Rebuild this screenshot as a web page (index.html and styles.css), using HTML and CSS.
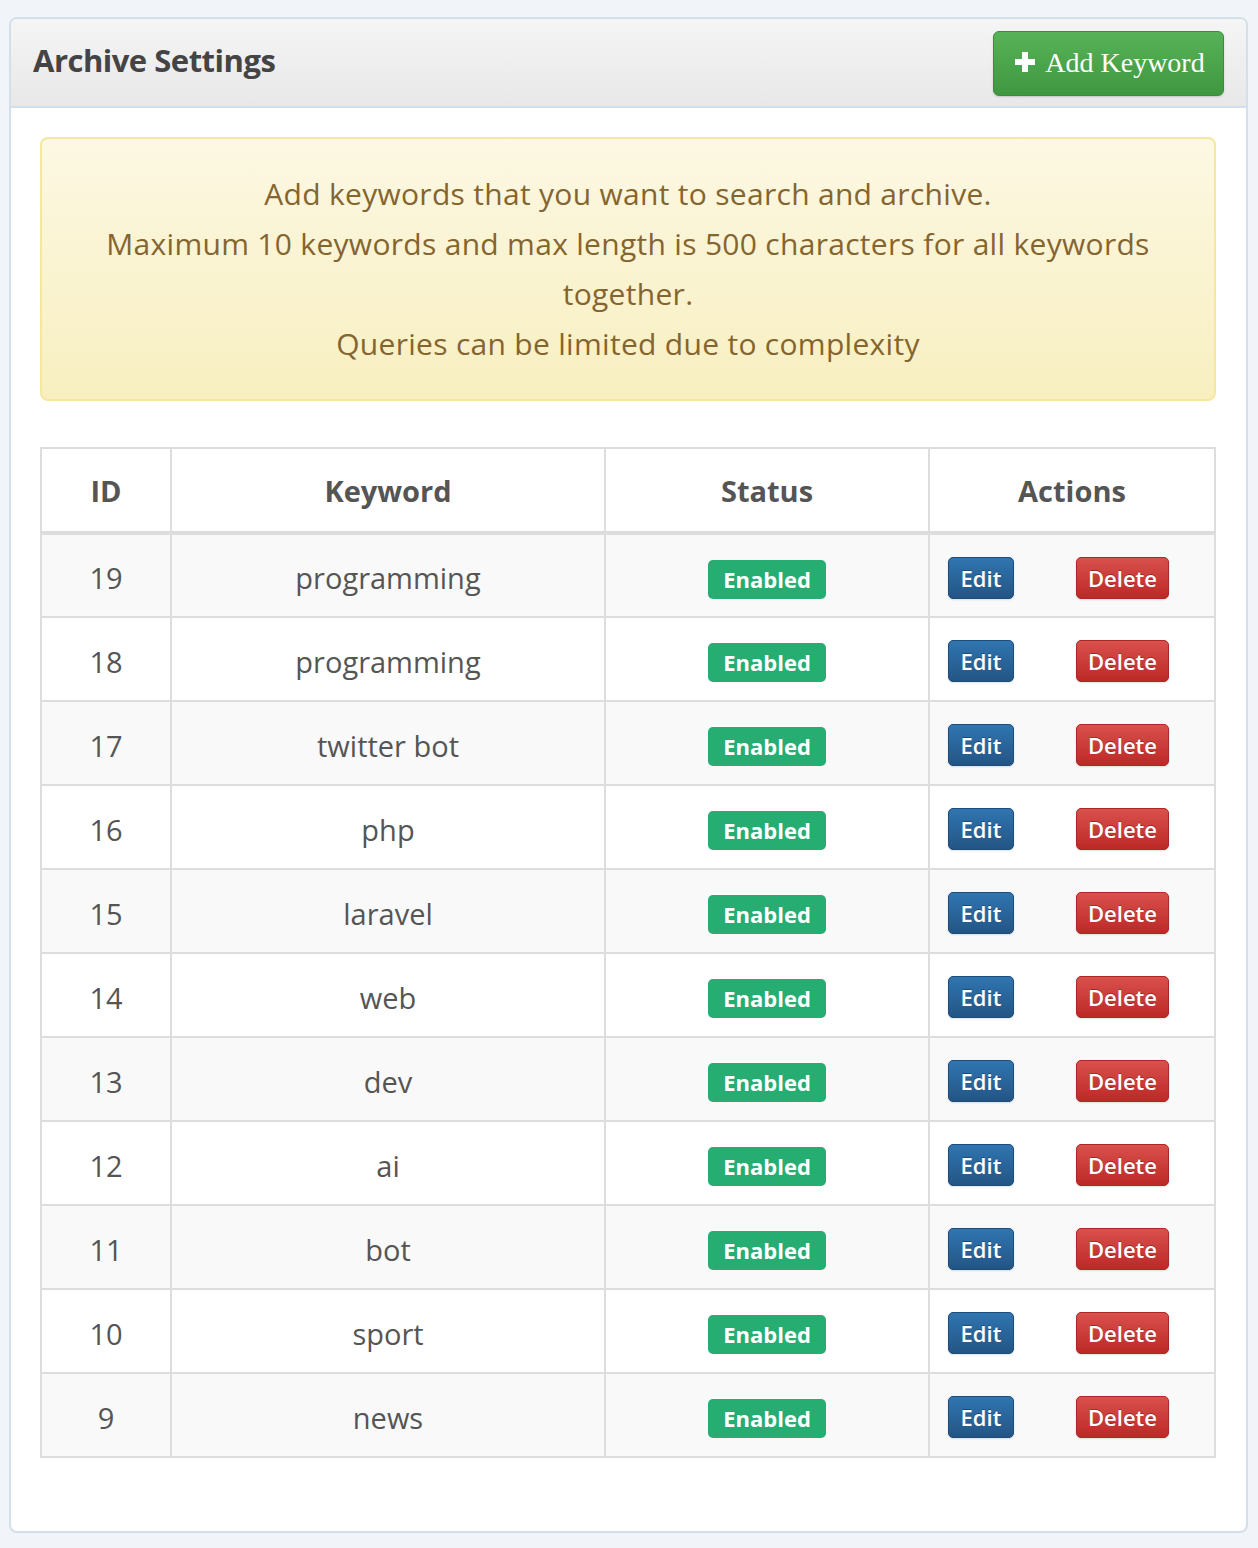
FILE: index.html
```html
<!DOCTYPE html>
<html>
<head>
<meta charset="utf-8">
<link rel="stylesheet" href="styles.css">
</head>
<body>
<div class="panel">
  <div class="panel-heading">
    <h3 class="panel-title">Archive Settings</h3>
    <button class="btn-add"><svg class="plus" viewBox="0 0 22 22" width="22" height="22"><path d="M8 1h6v7h7v6h-7v7H8v-7H1V8h7z" fill="#fff"/></svg>Add Keyword</button>
  </div>
  <div class="panel-body">
    <div class="alert">
      Add keywords that you want to search and archive.<br>
      Maximum 10 keywords and max length is 500 characters for all keywords<br>
      together.<br>
      Queries can be limited due to complexity
    </div>
    <table class="kw-table">
      <colgroup><col class="c-id"><col class="c-kw"><col class="c-st"><col class="c-ac"></colgroup>
      <thead>
        <tr><th>ID</th><th>Keyword</th><th>Status</th><th>Actions</th></tr>
      </thead>
      <tbody>
        <tr><td>19</td><td>programming</td><td><span class="label">Enabled</span></td><td><div class="actions"><button class="btn btn-edit">Edit</button><button class="btn btn-del">Delete</button></div></td></tr>
        <tr><td>18</td><td>programming</td><td><span class="label">Enabled</span></td><td><div class="actions"><button class="btn btn-edit">Edit</button><button class="btn btn-del">Delete</button></div></td></tr>
        <tr><td>17</td><td>twitter bot</td><td><span class="label">Enabled</span></td><td><div class="actions"><button class="btn btn-edit">Edit</button><button class="btn btn-del">Delete</button></div></td></tr>
        <tr><td>16</td><td>php</td><td><span class="label">Enabled</span></td><td><div class="actions"><button class="btn btn-edit">Edit</button><button class="btn btn-del">Delete</button></div></td></tr>
        <tr><td>15</td><td>laravel</td><td><span class="label">Enabled</span></td><td><div class="actions"><button class="btn btn-edit">Edit</button><button class="btn btn-del">Delete</button></div></td></tr>
        <tr><td>14</td><td>web</td><td><span class="label">Enabled</span></td><td><div class="actions"><button class="btn btn-edit">Edit</button><button class="btn btn-del">Delete</button></div></td></tr>
        <tr><td>13</td><td>dev</td><td><span class="label">Enabled</span></td><td><div class="actions"><button class="btn btn-edit">Edit</button><button class="btn btn-del">Delete</button></div></td></tr>
        <tr><td>12</td><td>ai</td><td><span class="label">Enabled</span></td><td><div class="actions"><button class="btn btn-edit">Edit</button><button class="btn btn-del">Delete</button></div></td></tr>
        <tr><td>11</td><td>bot</td><td><span class="label">Enabled</span></td><td><div class="actions"><button class="btn btn-edit">Edit</button><button class="btn btn-del">Delete</button></div></td></tr>
        <tr><td>10</td><td>sport</td><td><span class="label">Enabled</span></td><td><div class="actions"><button class="btn btn-edit">Edit</button><button class="btn btn-del">Delete</button></div></td></tr>
        <tr><td>9</td><td>news</td><td><span class="label">Enabled</span></td><td><div class="actions"><button class="btn btn-edit">Edit</button><button class="btn btn-del">Delete</button></div></td></tr>
      </tbody>
    </table>
  </div>
</div>
</body>
</html>
```
FILE: styles.css
```css
html, body {
  margin: 0;
  padding: 0;
  background: #f1f5f9;
}
body {
  padding: 17px 10px 15px 9px;
  font-family: "Open Sans", "DejaVu Sans", sans-serif;
  color: #555;
}
.panel {
  background: #fff;
  border: 2px solid #d3dfea;
  border-radius: 8px;
  height: 1516px;
  box-sizing: border-box;
  overflow: hidden;
}
.panel-heading {
  height: 89px;
  box-sizing: border-box;
  background: linear-gradient(#f5f5f5, #e8e8e8);
  border-bottom: 2px solid #d3dfea;
  display: flex;
  align-items: center;
  justify-content: space-between;
  padding: 0 22px 0 22px;
}
.panel-title {
  margin: -5px 0 0 0;
  font-size: 31px;
  font-weight: 700;
  color: #444;
  letter-spacing: -0.5px;
}
.btn-add {
  width: 231px;
  height: 65px;
  margin-top: 1px;
  border: 1px solid #3b8c3b;
  border-radius: 6px;
  background: linear-gradient(#58b258, #3f983f);
  color: #fff;
  font-family: "Liberation Serif", serif;
  font-size: 28px;
  display: flex;
  align-items: center;
  justify-content: center;
  gap: 9px;
  padding: 0 0 0 2px;
  box-shadow: 0 1px 2px rgba(0,0,0,0.15);
}
.plus { display: block; margin-top: -2px; }
.panel-body {
  padding: 29px 30px 30px 29px;
}
.alert {
  background: linear-gradient(#fcf8e3, #f8efc0);
  border: 2px solid #f5e79e;
  border-radius: 8px;
  color: #85652f;
  text-align: center;
  font-size: 30px;
  letter-spacing: 0.3px;
  line-height: 50px;
  padding: 30px 10px 30px;
  margin-bottom: 46px;
}
.kw-table {
  width: 1174px;
  border-collapse: collapse;
  table-layout: fixed;
  border: 2px solid #ddd;
}
.c-id { width: 130px; }
.c-kw { width: 434px; }
.c-st { width: 324px; }
.c-ac { width: 286px; }
.kw-table th, .kw-table td {
  border: 2px solid #ddd;
  text-align: center;
  padding: 0;
  font-size: 29px;
  vertical-align: middle;
}
.kw-table th {
  height: 82px;
  border-bottom-width: 4px;
  font-weight: 700;
  color: #555;
}
.kw-table td {
  height: 84px;
  padding-top: 4px;
  box-sizing: border-box;
  color: #555;
}
.kw-table tbody tr:nth-child(odd) td { background: #f9f9f9; }
.label {
  display: inline-block;
  width: 118px;
  height: 39px;
  line-height: 39px;
  background: #26ad72;
  color: #fff;
  border-radius: 5px;
  font-size: 22px;
  font-weight: 700;
  margin-top: 2px;
}
.actions {
  display: flex;
  align-items: center;
  padding-left: 18px;
  gap: 62px;
}
.btn {
  height: 42px;
  border-radius: 5px;
  color: #fff;
  font-family: "Open Sans", "DejaVu Sans", sans-serif;
  font-size: 22px;
  font-weight: 600;
  padding: 0;
  text-shadow: 0 -1px 0 rgba(0,0,0,0.3);
  box-shadow: 0 1px 2px rgba(0,0,0,0.12);
}
.btn-edit {
  width: 66px;
  background: linear-gradient(#3075b0, #235585);
  border: 1px solid #1f4d79;
}
.btn-del {
  width: 93px;
  background: linear-gradient(#d9504c, #bc2927);
  border: 1px solid #ad2726;
}
```
